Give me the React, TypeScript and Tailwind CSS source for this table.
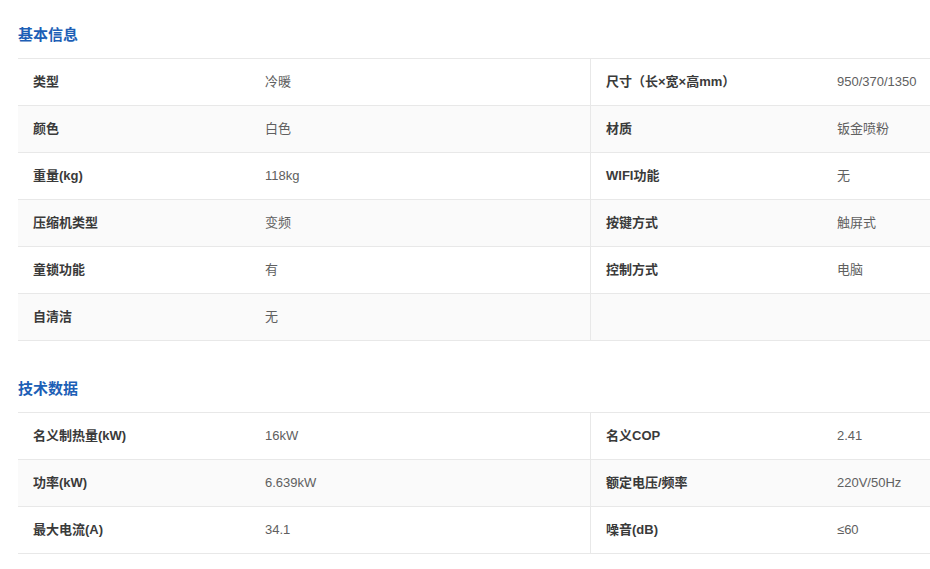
import React from "react";

type Row = [string, string, string, string];

const basic: Row[] = [
  ["类型", "冷暖", "尺寸（长×宽×高mm）", "950/370/1350"],
  ["颜色", "白色", "材质", "钣金喷粉"],
  ["重量(kg)", "118kg", "WIFI功能", "无"],
  ["压缩机类型", "变频", "按键方式", "触屏式"],
  ["童锁功能", "有", "控制方式", "电脑"],
  ["自清洁", "无", "", ""],
];

const tech: Row[] = [
  ["名义制热量(kW)", "16kW", "名义COP", "2.41"],
  ["功率(kW)", "6.639kW", "额定电压/频率", "220V/50Hz"],
  ["最大电流(A)", "34.1", "噪音(dB)", "≤60"],
];

function Section({ title, rows, first }: { title: string; rows: Row[]; first?: boolean }) {
  return (
    <div className={first ? "" : "mt-[13px]"}>
      <div className="h-[58px] pt-[25px] flex items-start">
        <h2 className="text-[15px] leading-[20px] font-bold text-[#1d5fb6]">{title}</h2>
      </div>
      <div className="border-t border-[#e8e8e8]">
        {rows.map((r, i) => (
          <div
            key={i}
            className={`flex h-[47px] border-b border-[#e8e8e8] ${i % 2 === 1 ? "bg-[#fafafa]" : "bg-white"}`}
          >
            <div className="w-[573px] flex items-center border-r border-[#e8e8e8] shrink-0">
              <div className="w-[247px] pl-[15px] font-bold text-[13px] text-[#3a3a3a] shrink-0">{r[0]}</div>
              <div className="text-[13px] text-[#606060]">{r[1]}</div>
            </div>
            <div className="w-[573px] flex items-center shrink-0">
              <div className="w-[246px] pl-[15px] font-bold text-[13px] text-[#3a3a3a] shrink-0">{r[2]}</div>
              <div className="text-[13px] text-[#606060]">{r[3]}</div>
            </div>
          </div>
        ))}
      </div>
    </div>
  );
}

export default function App() {
  return (
    <div
      className="w-[930px] h-[569px] overflow-hidden bg-white pl-[18px]"
      style={{ fontFamily: '"Liberation Sans", Arial, "Noto Sans CJK SC", sans-serif' }}
    >
      <div className="w-[1146px]">
        <Section title="基本信息" rows={basic} first />
        <Section title="技术数据" rows={tech} />
      </div>
    </div>
  );
}
